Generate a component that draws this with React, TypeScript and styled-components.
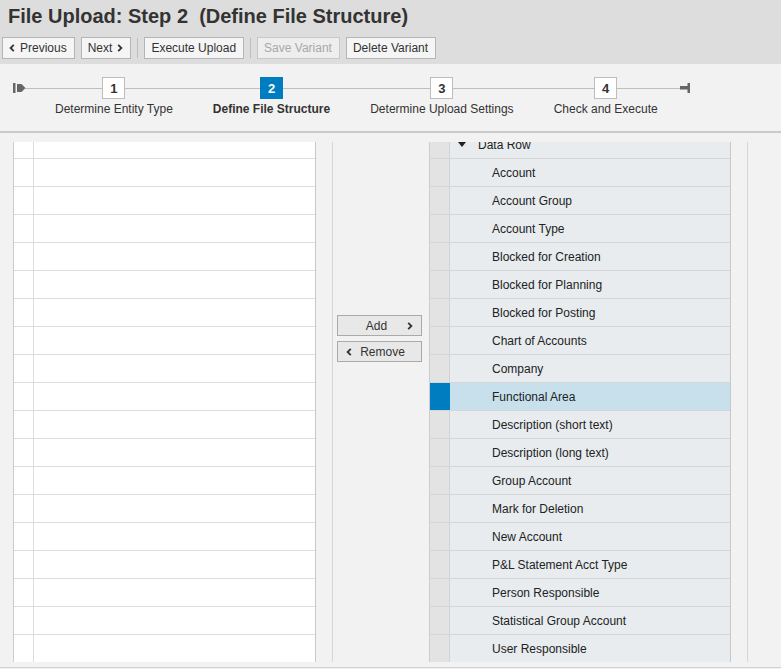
import React from "react";
import styled, { createGlobalStyle, css } from "styled-components";

const GlobalStyle = createGlobalStyle`
  html, body { margin: 0; padding: 0; }
  body {
    background: #f2f2f2;
    font-family: "Liberation Sans", Arial, sans-serif;
    font-size: 12px;
    color: #333333;
  }
`;

const Page = styled.div`
  width: 781px;
  height: 669px;
  overflow: hidden;
  display: flex;
  flex-direction: column;
  background: #f2f2f2;
`;

const Header = styled.header`
  height: 64px;
  box-sizing: border-box;
  background: #dddddd;
  padding: 5px 0 0 0;
  display: flex;
  flex-direction: column;
`;

const Title = styled.h1`
  margin: 0 0 0 8px;
  font-size: 20px;
  line-height: 22px;
  font-weight: bold;
  color: #333333;
  white-space: pre;
`;

const Toolbar = styled.div`
  display: flex;
  align-items: center;
  margin-top: 10px;
  padding-left: 2px;
  gap: 6px;
`;

const ToolButton = styled.button<{ $disabled?: boolean }>`
  height: 22px;
  box-sizing: border-box;
  display: flex;
  align-items: center;
  gap: 5px;
  padding: 0 7px 0 6px;
  font-family: inherit;
  font-size: 12px;
  background: #f5f5f5;
  border: 1px solid #b5b5b5;
  color: #333333;
  border-radius: 0;
  ${(p) =>
    p.$disabled &&
    css`
      color: #a8a8a8;
      border-color: #c8c8c8;
      background: #eeeeee;
    `}
`;

const ToolSep = styled.div`
  width: 1px;
  height: 20px;
  background: #bdbdbd;
`;

const Roadmap = styled.div`
  position: relative;
  box-sizing: border-box;
  padding: 13px 0 0 13px;
  display: flex;
  align-items: flex-start;
  border-bottom: 2px solid #c9c9c9;
  height: 69px;
  &::before {
    content: "";
    position: absolute;
    left: 25px;
    width: 660px;
    top: 24px;
    height: 1px;
    background: #bfbfbf;
  }
`;

const RoadIcon = styled.svg`
  position: relative;
  z-index: 1;
  display: block;
  margin-top: 5px;
`;

const StartSpacer = styled.div`
  width: 9px;
`;

const Step = styled.div`
  position: relative;
  z-index: 1;
  display: flex;
  flex-direction: column;
  align-items: center;
  padding: 0 20px;
`;

const StepBox = styled.div<{ $active?: boolean }>`
  width: 23px;
  height: 22px;
  box-sizing: border-box;
  border: 1px solid #bdbdbd;
  background: #ffffff;
  color: #333333;
  font-weight: bold;
  font-size: 13px;
  display: flex;
  align-items: center;
  justify-content: center;
  ${(p) =>
    p.$active &&
    css`
      background: #007cc0;
      border-color: #007cc0;
      color: #ffffff;
    `}
`;

const StepLabel = styled.div<{ $active?: boolean }>`
  margin-top: 3px;
  line-height: 14px;
  font-size: 12px;
  color: #333333;
  white-space: nowrap;
  font-weight: ${(p) => (p.$active ? "bold" : "normal")};
`;

const Content = styled.main`
  display: flex;
  padding: 9px 0 5px 13px;
  border-bottom: 1px solid #d2d2d2;
`;

const Panel = styled.div`
  display: flex;
  height: 520px;
  border-right: 1px solid #d6d6d6;
`;

const TableFrame = styled.div<{ $width: number }>`
  width: ${(p) => p.$width}px;
  height: 520px;
  overflow: hidden;
  box-sizing: border-box;
  border-left: 1px solid #cccccc;
  border-right: 1px solid #c8c8c8;
`;

const TableBody = styled.div`
  margin-top: -11px;
  display: flex;
  flex-direction: column;
`;

const Row = styled.div<{ $tone: "white" | "grey"; $selected?: boolean }>`
  display: flex;
  height: 28px;
  box-sizing: border-box;
  border-bottom: 1px solid ${(p) => (p.$tone === "white" ? "#dcdcdc" : "#d6d6d6")};
  background: ${(p) => (p.$tone === "white" ? "#ffffff" : "#e8ecef")};
  ${(p) =>
    p.$selected &&
    css`
      background: #c7e0ec;
    `}
`;

const Selector = styled.div<{ $tone: "white" | "grey"; $selected?: boolean }>`
  width: 19px;
  flex: none;
  border-right: 1px solid ${(p) => (p.$tone === "white" ? "#dcdcdc" : "#d2d2d2")};
  background: ${(p) => (p.$tone === "white" ? "#ffffff" : "#e3e3e3")};
  ${(p) =>
    p.$selected &&
    css`
      background: #007cc0;
      border-right-color: #007cc0;
    `}
`;

const Cell = styled.div<{ $level?: number }>`
  flex: 1;
  display: flex;
  align-items: center;
  padding-left: ${(p) => (p.$level === 0 ? 8 : 42)}px;
  color: #222222;
  font-size: 12px;
  white-space: nowrap;
`;

const Gutter = styled.div`
  width: 16px;
`;

const Middle = styled.div`
  width: 96px;
  box-sizing: border-box;
  padding: 173px 0 0 4px;
  display: flex;
  flex-direction: column;
  gap: 5px;
`;

const MoveButton = styled.button`
  width: 85px;
  height: 21px;
  box-sizing: border-box;
  display: flex;
  align-items: center;
  padding: 0 8px;
  background: #e8e8e8;
  border: 1px solid #aaaaaa;
  border-radius: 0;
  font-family: inherit;
  font-size: 12px;
  color: #333333;
`;

const MoveText = styled.span`
  flex: 1;
  text-align: center;
`;

const Triangle = styled.span`
  display: inline-block;
  width: 0;
  height: 0;
  border-left: 4px solid transparent;
  border-right: 4px solid transparent;
  border-top: 5px solid #222222;
  margin-right: 12px;
`;

const Chevron = ({ dir }: { dir: "left" | "right" }) => (
  <svg width="6" height="8" viewBox="0 0 6 8" style={{ display: "block" }}>
    <path
      d={dir === "right" ? "M1.2 0.8 L4.4 4 L1.2 7.2" : "M4.8 0.8 L1.6 4 L4.8 7.2"}
      fill="none"
      stroke="#333"
      strokeWidth="1.8"
    />
  </svg>
);

const steps = [
  { n: 1, label: "Determine Entity Type" },
  { n: 2, label: "Define File Structure", active: true },
  { n: 3, label: "Determine Upload Settings" },
  { n: 4, label: "Check and Execute" },
];

const fields = [
  "Account",
  "Account Group",
  "Account Type",
  "Blocked for Creation",
  "Blocked for Planning",
  "Blocked for Posting",
  "Chart of Accounts",
  "Company",
  "Functional Area",
  "Description (short text)",
  "Description (long text)",
  "Group Account",
  "Mark for Deletion",
  "New Account",
  "P&L Statement Acct Type",
  "Person Responsible",
  "Statistical Group Account",
  "User Responsible",
];

export default function App() {
  return (
    <>
      <GlobalStyle />
      <Page>
        <Header>
          <Title>File Upload: Step 2  (Define File Structure)</Title>
          <Toolbar>
            <ToolButton>
              <Chevron dir="left" />
              Previous
            </ToolButton>
            <ToolButton>
              Next
              <Chevron dir="right" />
            </ToolButton>
            <ToolSep />
            <ToolButton>Execute Upload</ToolButton>
            <ToolSep />
            <ToolButton $disabled>Save Variant</ToolButton>
            <ToolButton>Delete Variant</ToolButton>
          </Toolbar>
        </Header>

        <Roadmap>
          <RoadIcon width="13" height="12" viewBox="0 0 13 12">
            <rect x="0" y="1" width="2.5" height="10" fill="#666" />
            <path d="M4 2 H8.5 L12.5 6 L8.5 10 H4 Z" fill="#666" />
          </RoadIcon>
          <StartSpacer />
          {steps.map((s) => (
            <Step key={s.n}>
              <StepBox $active={s.active}>{s.n}</StepBox>
              <StepLabel $active={s.active}>{s.label}</StepLabel>
            </Step>
          ))}
          <RoadIcon width="12" height="12" viewBox="0 0 12 12" style={{ marginLeft: 2 }}>
            <rect x="0" y="4" width="8" height="3.5" fill="#666" />
            <rect x="7.5" y="1" width="2.5" height="10" fill="#666" />
          </RoadIcon>
        </Roadmap>

        <Content>
          <Panel>
            <TableFrame $width={303}>
              <TableBody>
                {Array.from({ length: 19 }).map((_, i) => (
                  <Row key={i} $tone="white">
                    <Selector $tone="white" />
                    <Cell />
                  </Row>
                ))}
              </TableBody>
            </TableFrame>
            <Gutter />
          </Panel>

          <Middle>
            <MoveButton>
              <MoveText>Add</MoveText>
              <Chevron dir="right" />
            </MoveButton>
            <MoveButton>
              <Chevron dir="left" />
              <MoveText>Remove</MoveText>
            </MoveButton>
          </Middle>

          <Panel>
            <TableFrame $width={302}>
              <TableBody>
                <Row $tone="grey">
                  <Selector $tone="grey" />
                  <Cell $level={0}>
                    <Triangle />
                    Data Row
                  </Cell>
                </Row>
                {fields.map((f) => {
                  const sel = f === "Functional Area";
                  return (
                    <Row key={f} $tone="grey" $selected={sel}>
                      <Selector $tone="grey" $selected={sel} />
                      <Cell $level={1}>{f}</Cell>
                    </Row>
                  );
                })}
              </TableBody>
            </TableFrame>
            <Gutter />
          </Panel>
        </Content>
      </Page>
    </>
  );
}
